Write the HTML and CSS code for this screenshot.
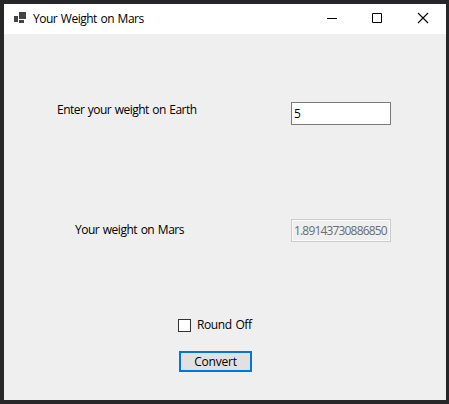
FILE: index.html
```html
<!DOCTYPE html>
<html lang="en">
<head>
<meta charset="utf-8">
<title>Your Weight on Mars</title>
<link rel="stylesheet" href="styles.css">
</head>
<body>
<div class="window">
  <header class="titlebar">
    <svg class="app-icon" width="13" height="12" viewBox="0 0 13 12" fill="#444346"><path d="M5 0h7v7H5zM0 4h4v6H0zM5 8h5v3H5z"/></svg>
    <span class="title">Your Weight on Mars</span>
    <svg class="control" width="46" height="30" viewBox="0 0 46 30" stroke="#000" fill="none"><path d="M18 14.5h10"/></svg>
    <svg class="control" width="46" height="30" viewBox="0 0 46 30" stroke="#000" fill="none"><path d="M17.5 9.500h9v9h-9z"/></svg>
    <svg class="control" width="46" height="30" viewBox="0 0 46 30" stroke="#000" stroke-width="1.1" fill="none"><path d="M17 9l10 10M27 9L17 19"/></svg>
  </header>
  <main class="form">
    <div class="row row-earth">
      <label class="label-earth" for="earth">Enter your weight on Earth</label>
      <input class="field" id="earth" type="text" value="5">
    </div>
    <div class="row row-mars">
      <label class="label-mars" for="mars">Your weight on Mars</label>
      <input class="field result" id="mars" type="text" value="1.89143730886850" disabled>
    </div>
    <label class="round"><input class="check" type="checkbox"><span class="round-text">Round Off</span></label>
    <button class="convert" type="button">Convert</button>
  </main>
</div>
</body>
</html>
```
FILE: styles.css
```css
* { box-sizing: border-box; }
body {
  margin: 0;
  height: 404px;
  padding: 4px 3px 4px 4px;
  background: #272629;
  color: #000;
  font: 12px/16px "Open Sans", "Noto Sans", sans-serif;
  overflow: hidden;
}
.window { height: 396px; background: #efefef; }
.titlebar {
  display: flex;
  height: 30px;
  padding-left: 10px;
  background: #fff;
}
.app-icon { margin-top: 8px; }
.title {
  flex: 1;
  margin: 7px 0 0 6px;
  letter-spacing: -0.5px;
  word-spacing: 1px;
  white-space: nowrap;
}
.control { flex: none; }
.control:last-child { margin-right: -1px; }
.form { display: flex; flex-direction: column; }
.row {
  display: flex;
  align-items: flex-start;
  justify-content: space-between;
  height: 23px;
  padding-right: 55px;
}
.row-earth { margin-top: 68px; padding-left: 53px; }
.row-mars { margin-top: 94px; padding-left: 71px; }
.label-earth { letter-spacing: -0.54px; word-spacing: 1px; }
.label-mars { margin-top: 3px; letter-spacing: -0.5px; word-spacing: 1px; }
.field {
  width: 100px;
  height: 23px;
  margin: 0;
  padding: 0 0 1px 2px;
  border: 1px solid #7a7a7a;
  border-radius: 0;
  background: #fff;
  color: #000;
  font: inherit;
  outline: none;
}
.result {
  border-color: #ccc;
  background: #efefef;
  box-shadow: inset 0 0 0 1px #fafafa;
  color: #6d6d6d;
  letter-spacing: -0.83px;
}
.round {
  display: flex;
  align-items: center;
  gap: 6px;
  height: 16px;
  margin: 75px 0 0 174px;
}
.check {
  appearance: none;
  width: 13px;
  height: 13px;
  margin: 0;
  border: 1px solid #333;
  background: #fff;
}
.round-text { letter-spacing: -0.4px; word-spacing: 1px; }
.convert {
  width: 73px;
  height: 21px;
  margin: 18px 0 0 175px;
  padding: 0;
  border: 2px solid #0078d7;
  background: #e1e1e1;
  color: #000;
  font: inherit;
  letter-spacing: -0.2px;
}
```
